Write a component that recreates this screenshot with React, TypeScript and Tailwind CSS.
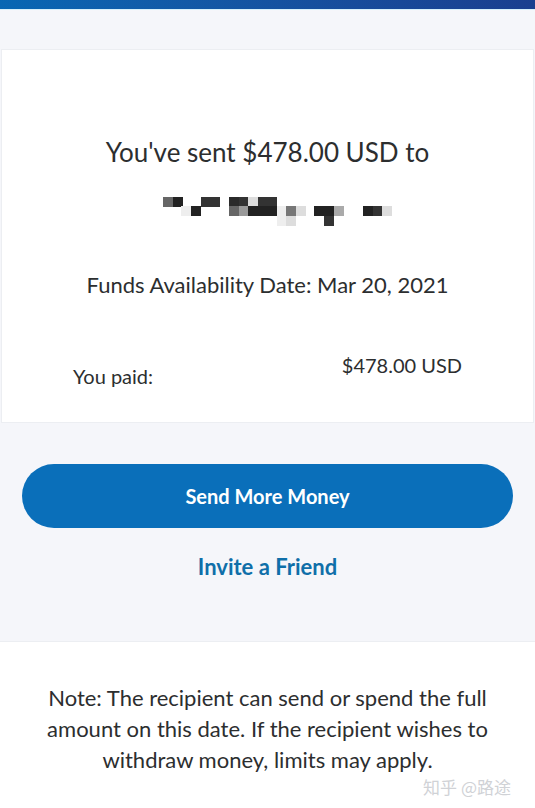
import React from 'react';

const BLOCKS: [number, number, string][] = [
  [162, 197, '#666'], [172, 197, '#222'], [180, 206, '#eee'], [190, 206, '#222'],
  [200, 197, '#333'], [209, 197, '#333'],
  [228, 197, '#2a2a2a'], [238, 197, '#333'], [247, 197, '#ddd'], [257, 197, '#333'], [266, 197, '#333'],
  [228, 206, '#666'], [238, 206, '#999'], [247, 206, '#222'], [257, 206, '#222'], [266, 206, '#222'],
  [276, 206, '#eee'], [285, 206, '#777'], [295, 206, '#ddd'],
  [276, 216, '#eee'], [285, 216, '#ddd'],
  [313, 206, '#222'], [323, 206, '#222'], [333, 206, '#aaa'], [323, 216, '#333'],
  [362, 206, '#222'], [372, 206, '#333'], [381, 206, '#ddd'],
];

function Pixelated() {
  return (
    <svg width="535" height="40" viewBox="0 190 535 40" className="block">
      {BLOCKS.map(([x, y, c], i) => (
        <rect key={i} x={x} y={y} width="10" height="10" fill={c} />
      ))}
    </svg>
  );
}

export default function App() {
  return (
    <div
      className="w-[535px] h-[808px] overflow-hidden bg-[#f5f6fa] text-[#2c2e2f]"
      style={{ fontFamily: 'Lato, "Open Sans", sans-serif' }}
    >
      <div className="h-[9px] bg-gradient-to-r from-[#0767b3] to-[#1a3f8f]" />
      <div className="h-px bg-[#d6f0fb]" />
      <div className="h-[39px]" />

      <div className="mx-px bg-white border border-[#eceef2] h-[374px] flex flex-col">
        <div className="pt-[86px] text-center text-[26px] leading-8">You've sent $478.00 USD to</div>
        <div className="mt-[22px] -mx-px">
          <Pixelated />
        </div>
        <div className="mt-[41px] text-center text-[22px] leading-7">
          Funds Availability Date: Mar 20, 2021
        </div>
        <div className="mt-[54px] flex pl-[71px] pr-[71px] justify-between">
          <span className="text-[20px] leading-7 mt-[9px]">You paid:</span>
          <span className="text-[20px] leading-7 -mt-[2px]">$478.00 USD</span>
        </div>
      </div>

      <div className="px-[22px] pt-[41px]">
        <button className="w-full h-[64px] rounded-full bg-[#0a6fba] text-white text-[20px] font-bold">
          Send More Money
        </button>
        <div className="mt-[22px] text-center text-[22px] font-bold text-[#0f6fa9]">Invite a Friend</div>
      </div>

      <div className="mt-[58px] bg-white border-t border-[#eceef2] h-[170px] relative">
        <p className="pt-[40px] px-[30px] text-center text-[22px] leading-[31px]">
          Note: The recipient can send or spend the full amount on this date. If the recipient wishes to
          withdraw money, limits may apply.
        </p>
        <span
          className="absolute right-[24px] bottom-[12px] text-[17px] text-[#d0d2d6]"
          style={{ fontFamily: '"Noto Sans CJK SC", sans-serif' }}
        >
          知乎 @路途
        </span>
      </div>
    </div>
  );
}
